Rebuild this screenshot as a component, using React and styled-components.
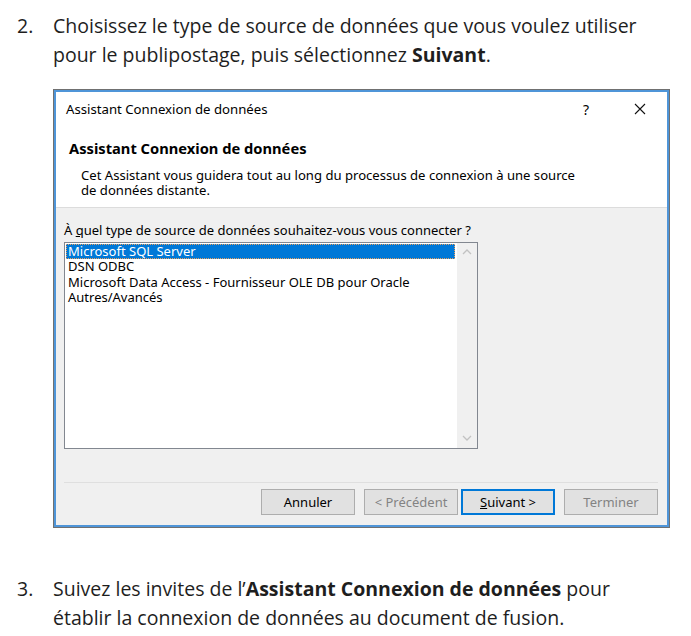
import React from 'react';
import styled, { createGlobalStyle } from 'styled-components';

const GlobalStyle = createGlobalStyle`
    body {
        margin: 0;
        background: #ffffff;
        font-family: "Open Sans", "Noto Sans", sans-serif;
        color: #1e1e1e;
    }
`

const Page = styled.div`
    width: 691px;
    padding-top: 12px;
`

const Step = styled.div`
    display: grid;
    grid-template-columns: 53px 1fr;
    font-size: 19.5px;
    line-height: 28.5px;
    color: #1e1e1e;
    margin-top: ${({ top }) => top || 0}px;

    .num {
        padding-left: 17px;
    }

    b {
        font-weight: 700;
    }
`

const StepBody = styled.div`
    max-width: 605px;
`

const DialogWrap = styled.div`
    margin: 20px 0 0 53px;
    width: 617px;
    border: 1px solid #707070;
    box-sizing: border-box;
`

const Dialog = styled.div`
    border: 2px solid #4f95d8;
    background: #f0f0f0;
    font-family: "Noto Sans", "DejaVu Sans", sans-serif;
    font-size: 13px;
    color: #000;
`

const TitleBar = styled.div`
    display: flex;
    align-items: center;
    height: 34px;
    padding-left: 10px;
    background: #ffffff;
    font-size: 13.2px;

    .title {
        flex: 1;
    }
`

const TitleButton = styled.div`
    width: 54px;
    display: flex;
    justify-content: center;
    align-items: center;
    font-size: 14px;
`

const Header = styled.div`
    background: #ffffff;
    padding: 13px 10px 9px 13px;
    border-bottom: 1px solid #dcdcdc;

    h1 {
        margin: 0 0 11px;
        font-size: 14.7px;
        line-height: 18px;
        font-weight: 700;
    }

    p {
        margin: 0 0 0 12px;
        font-size: 13.1px;
        line-height: 15px;
        width: 505px;
    }
`

const Body = styled.div`
    padding: 14px 9px 10px 8px;
`

const Label = styled.div`
    line-height: 16px;
    margin-bottom: 4px;

    u {
        text-decoration: underline;
    }
`

const ListBox = styled.div`
    display: flex;
    width: 414px;
    height: 207px;
    box-sizing: border-box;
    border: 1px solid #828790;
    background: #ffffff;
`

const Items = styled.div`
    flex: 1;
    padding: 1px 2px 0 1px;
`

const Item = styled.div`
    line-height: 15.4px;
    padding-left: 2px;
    background: ${({ selected }) => (selected ? '#0078d7' : 'transparent')};
    color: ${({ selected }) => (selected ? '#ffffff' : '#000000')};
    outline: ${({ selected }) => (selected ? '1px dotted #e8a060' : 'none')};
    outline-offset: -1px;
`

const ScrollBar = styled.div`
    width: 20px;
    background: #f0f0f0;
    display: flex;
    flex-direction: column;
    justify-content: space-between;
    align-items: center;
    padding: 5px 0 6px;
    box-sizing: border-box;
`

const Footer = styled.div`
    margin-top: 33px;
    border-top: 1px solid #dfdfdf;
    padding-top: 6px;
    display: flex;
    justify-content: flex-end;
`

const Button = styled.div`
    width: 94px;
    height: 26px;
    box-sizing: border-box;
    display: flex;
    align-items: center;
    justify-content: center;
    background: #e1e1e1;
    border: ${({ $primary }) => ($primary ? '2px solid #0078d7' : '1px solid #adadad')};
    color: ${({ $disabled }) => ($disabled ? '#838383' : '#000000')};
    margin-left: ${({ $gap }) => $gap || 0}px;
`

const Chevron = ({ up }) => (
    <svg width="10" height="7" viewBox="0 0 10 7">
        <path
            d={up ? 'M1 6 L5 2 L9 6' : 'M1 1 L5 5 L9 1'}
            fill="none"
            stroke="#c2c2c2"
            strokeWidth="1.3"
        />
    </svg>
)

const App = () => {
    const items = [
        'Microsoft SQL Server',
        'DSN ODBC',
        'Microsoft Data Access - Fournisseur OLE DB pour Oracle',
        'Autres/Avancés',
    ];

    return (
        <>
            <GlobalStyle />
            <Page>
                <Step>
                    <span className="num">2.</span>
                    <StepBody>
                        Choisissez le type de source de données que vous voulez utiliser pour le publipostage, puis sélectionnez <b>Suivant</b>.
                    </StepBody>
                </Step>

                <DialogWrap>
                    <Dialog>
                        <TitleBar>
                            <span className="title">Assistant Connexion de données</span>
                            <TitleButton>?</TitleButton>
                            <TitleButton>
                                <svg width="12" height="12" viewBox="0 0 12 12">
                                    <path d="M1 1 L11 11 M11 1 L1 11" stroke="#111" strokeWidth="1.1" />
                                </svg>
                            </TitleButton>
                        </TitleBar>
                        <Header>
                            <h1>Assistant Connexion de données</h1>
                            <p>Cet Assistant vous guidera tout au long du processus de connexion à une source de données distante.</p>
                        </Header>
                        <Body>
                            <Label>À <u>q</u>uel type de source de données souhaitez-vous vous connecter ?</Label>
                            <ListBox>
                                <Items>
                                    {items.map((item, index) => (
                                        <Item key={index.toString()} selected={index === 0}>{item}</Item>
                                    ))}
                                </Items>
                                <ScrollBar>
                                    <Chevron up />
                                    <Chevron />
                                </ScrollBar>
                            </ListBox>
                            <Footer>
                                <Button>Annuler</Button>
                                <Button $disabled $gap={9}>&lt; Précédent</Button>
                                <Button $primary $gap={3}><span><u>S</u>uivant &gt;</span></Button>
                                <Button $disabled $gap={9}>Terminer</Button>
                            </Footer>
                        </Body>
                    </Dialog>
                </DialogWrap>

                <Step top={47}>
                    <span className="num">3.</span>
                    <StepBody>
                        Suivez les invites de l’<b>Assistant Connexion de données</b> pour établir la connexion de données au document de fusion.
                    </StepBody>
                </Step>
            </Page>
        </>
    )
}

export default App;
